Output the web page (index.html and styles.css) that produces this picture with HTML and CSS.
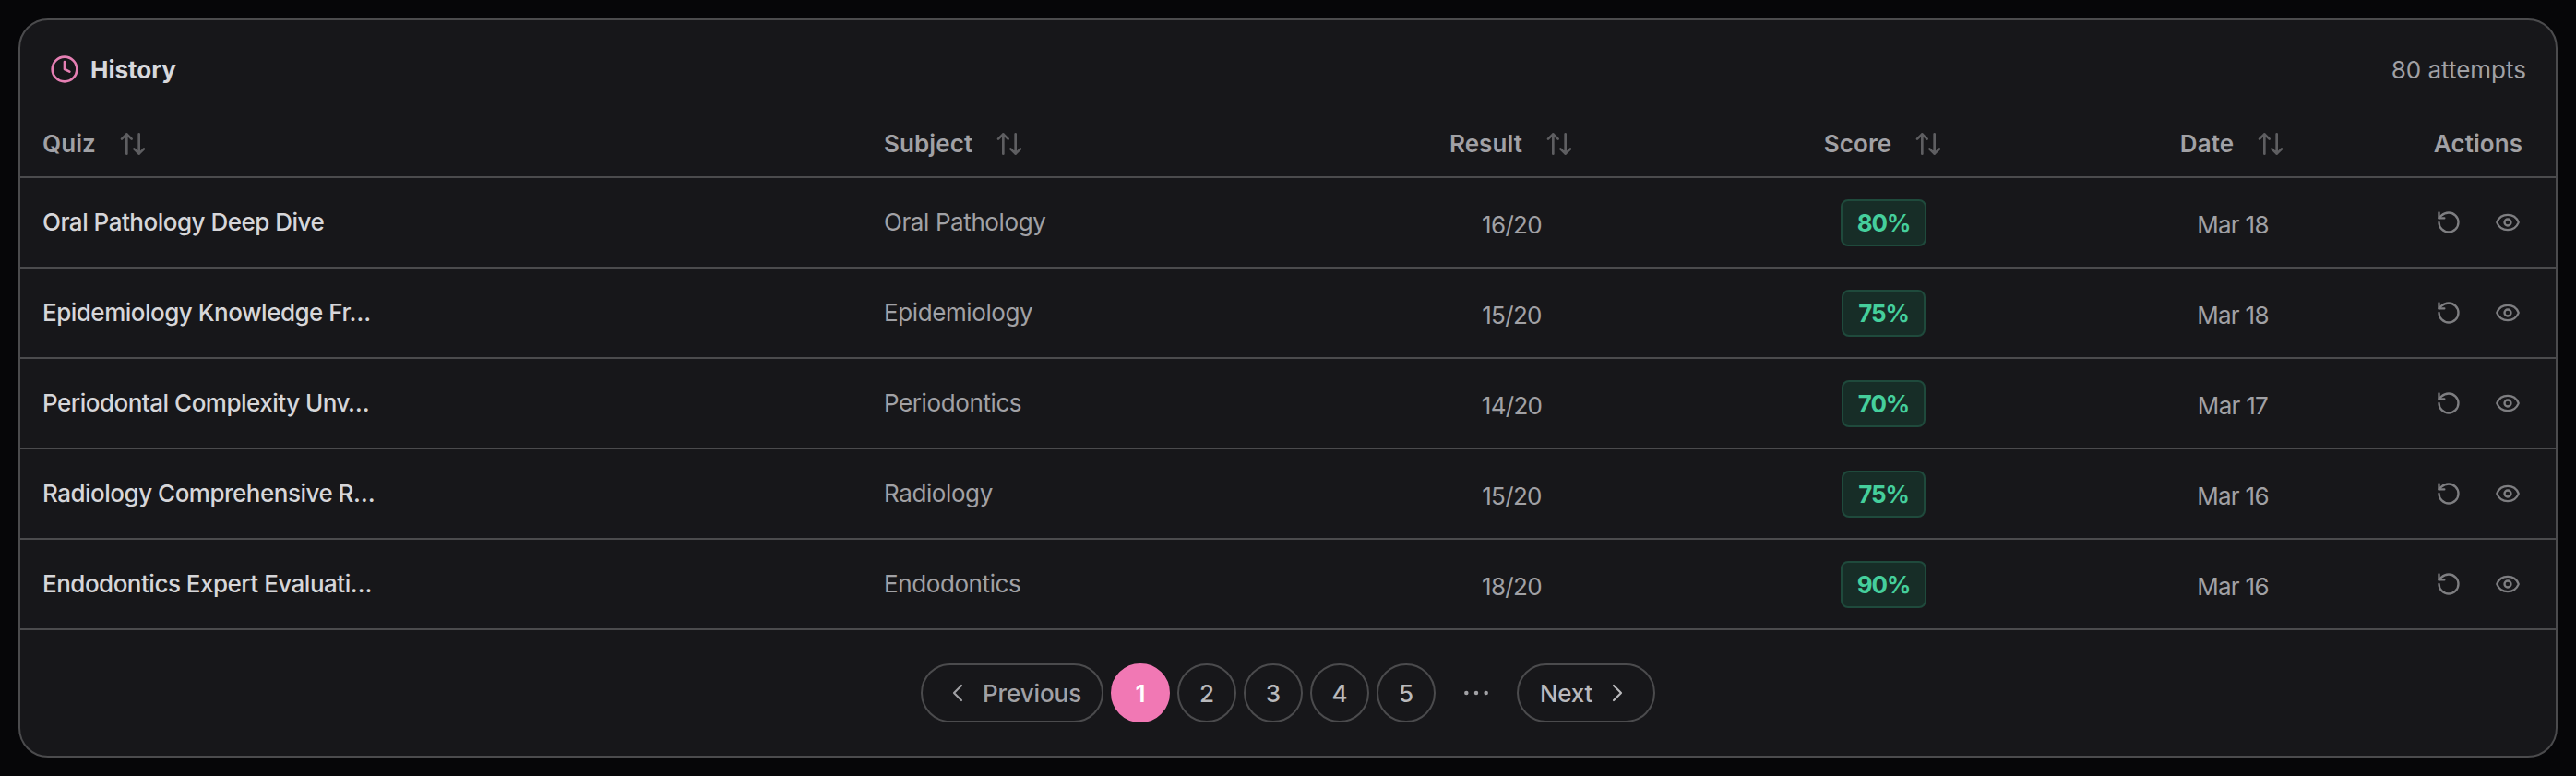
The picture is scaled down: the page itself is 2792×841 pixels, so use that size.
FILE: index.html
```
<!DOCTYPE html>
<html lang="en">
<head>
<meta charset="UTF-8" />
<title>History</title>
<link rel="stylesheet" href="styles.css">
</head>
<body>
  <svg class="sprite" aria-hidden="true">
    <symbol id="i-clock" viewBox="0 0 24 24"><circle cx="12" cy="12" r="10" /><path d="M12 6v6l4 2" /></symbol>
    <symbol id="i-sort" viewBox="0 0 24 24"><path d="m21 16-4 4-4-4M17 20V4M3 8l4-4 4 4M7 4v16" /></symbol>
    <symbol id="i-retry" viewBox="0 0 24 24"><path d="M3 12a9 9 0 1 0 9-9 9.75 9.75 0 0 0-6.74 2.74L3 8" /><path d="M3 3v5h5" /></symbol>
    <symbol id="i-eye" viewBox="0 0 24 24"><path d="M2.06 12.35a1 1 0 0 1 0-.7 10.75 10.75 0 0 1 19.88 0 1 1 0 0 1 0 .7 10.75 10.75 0 0 1-19.88 0" /><circle cx="12" cy="12" r="3" /></symbol>
    <symbol id="i-left" viewBox="0 0 24 24"><path d="m15 18-6-6 6-6" /></symbol>
    <symbol id="i-right" viewBox="0 0 24 24"><path d="m9 18 6-6-6-6" /></symbol>
    <symbol id="i-more" viewBox="0 0 24 24"><circle cx="4" cy="12" r="1.7" /><circle cx="12" cy="12" r="1.7" /><circle cx="20" cy="12" r="1.7" /></symbol>
  </svg>

  <section class="card">
    <header class="card-header">
      <h2 class="title"><svg class="icon title-icon"><use href="#i-clock" /></svg><span>History</span></h2>
      <span class="attempts">80 attempts</span>
    </header>

    <table class="history">
      <colgroup>
        <col class="col-quiz"><col class="col-subject"><col class="col-result">
        <col class="col-score"><col class="col-date"><col class="col-actions">
      </colgroup>
      <thead>
        <tr>
          <th class="left"><span class="sort"><span>Quiz</span><svg class="icon"><use href="#i-sort" /></svg></span></th>
          <th class="left"><span class="sort"><span>Subject</span><svg class="icon"><use href="#i-sort" /></svg></span></th>
          <th><span class="sort"><span>Result</span><svg class="icon"><use href="#i-sort" /></svg></span></th>
          <th><span class="sort"><span>Score</span><svg class="icon"><use href="#i-sort" /></svg></span></th>
          <th><span class="sort"><span>Date</span><svg class="icon"><use href="#i-sort" /></svg></span></th>
          <th>Actions</th>
        </tr>
      </thead>
      <tbody id="rows"></tbody>
    </table>

    <nav class="pagination">
      <button class="page-btn prev"><svg class="icon"><use href="#i-left" /></svg><span>Previous</span></button>
      <button class="page-btn active">1</button>
      <button class="page-btn">2</button>
      <button class="page-btn">3</button>
      <button class="page-btn">4</button>
      <button class="page-btn">5</button>
      <span class="more"><svg class="icon"><use href="#i-more" /></svg></span>
      <button class="page-btn next"><span>Next</span><svg class="icon"><use href="#i-right" /></svg></button>
    </nav>
  </section>

<script src="script.js"></script>
</body>
</html>
```

FILE: styles.css
```
* {
  box-sizing: border-box;
}
body {
  margin: 0;
  padding: 20px;
  background-color: #060608;
  color: #a1a1a5;
  font-family: Inter, 'Liberation Sans', sans-serif;
  font-size: 26px;
}
.sprite {
  display: none;
}
.icon {
  width: 32px;
  height: 32px;
  flex-shrink: 0;
  fill: none;
  stroke: currentColor;
  stroke-width: 2;
  stroke-linecap: round;
  stroke-linejoin: round;
}
.card {
  height: 801px;
  background-color: #17171a;
  border: 2px solid #4b4b4d;
  border-radius: 32px;
  overflow: hidden;
}
.card-header {
  display: flex;
  justify-content: space-between;
  align-items: center;
  height: 97px;
  padding: 9px 32px 0;
}
.title {
  display: flex;
  align-items: center;
  gap: 12px;
  margin: 0;
  font-size: 26px;
  font-weight: 700;
  color: #d8d8dc;
}
.title-icon {
  color: #e57fb3;
}
.history {
  width: 100%;
  table-layout: fixed;
  border-collapse: separate;
  border-spacing: 0;
}
.col-quiz { width: 912px; }
.col-subject { width: 498px; }
.col-result { width: 413px; }
.col-score { width: 393px; }
.col-date { width: 364px; }
.col-actions { width: 168px; }
th, td {
  padding: 0;
  text-align: center;
  vertical-align: middle;
  border-bottom: 2px solid #4b4b4d;
}
th {
  height: 74px;
  font-weight: 600;
  letter-spacing: 0.1px;
}
td {
  height: 98px;
  letter-spacing: -0.4px;
}
.left {
  padding-left: 24px;
  text-align: left;
}
td.left {
  padding-bottom: 2px;
}
.sort {
  display: inline-flex;
  align-items: center;
  gap: 24px;
  vertical-align: middle;
}
.sort .icon {
  color: #5e5e61;
}
.quiz {
  font-weight: 500;
  letter-spacing: -0.5px;
  color: #d6d6d9;
}
.low {
  padding-top: 5px;
  letter-spacing: -0.7px;
}
.badge {
  display: inline-flex;
  align-items: center;
  height: 51px;
  padding: 0 16px;
  border: 2px solid #1f4a3c;
  border-radius: 8px;
  background-color: #172d27;
  color: #45cf9c;
  font-weight: 700;
  letter-spacing: -1.1px;
  vertical-align: middle;
}
.actions {
  display: flex;
  justify-content: center;
}
.action-btn {
  display: flex;
  align-items: center;
  justify-content: center;
  width: 64px;
  height: 64px;
  padding: 0;
  border: none;
  background: none;
  color: #7e7e81;
  cursor: pointer;
}
.action-btn .icon {
  width: 28px;
  height: 28px;
}
.pagination {
  display: flex;
  justify-content: center;
  gap: 8px;
  padding-top: 36px;
}
.page-btn {
  display: flex;
  align-items: center;
  justify-content: center;
  width: 64px;
  height: 64px;
  padding: 0;
  border: 2px solid #4b4b4d;
  border-radius: 32px;
  background: none;
  color: #b9b9bc;
  font: inherit;
  font-weight: 500;
  cursor: pointer;
}
.page-btn .icon {
  stroke-width: 1.6;
}
.page-btn.active {
  border-color: #f178b4;
  background-color: #f178b4;
  color: #fff;
  font-weight: 600;
}
.prev {
  width: 198px;
  gap: 11px;
  color: #a1a1a5;
  letter-spacing: -0.1px;
}
.next {
  width: 150px;
  gap: 11px;
  letter-spacing: -0.3px;
}
.more {
  display: flex;
  align-items: center;
  justify-content: center;
  width: 72px;
  height: 64px;
}
.more .icon {
  fill: currentColor;
  stroke: none;
}
```

FILE: script.js
```
const attempts = [
  { quiz: 'Oral Pathology Deep Dive', subject: 'Oral Pathology', result: '16/20', score: 80, date: 'Mar 18' },
  { quiz: 'Epidemiology Knowledge Fr…', subject: 'Epidemiology', result: '15/20', score: 75, date: 'Mar 18' },
  { quiz: 'Periodontal Complexity Unv…', subject: 'Periodontics', result: '14/20', score: 70, date: 'Mar 17' },
  { quiz: 'Radiology Comprehensive R…', subject: 'Radiology', result: '15/20', score: 75, date: 'Mar 16' },
  { quiz: 'Endodontics Expert Evaluati…', subject: 'Endodontics', result: '18/20', score: 90, date: 'Mar 16' }
];

document.getElementById('rows').innerHTML = attempts.map(a => `
  <tr>
    <td class="left quiz">${a.quiz}</td>
    <td class="left">${a.subject}</td>
    <td class="low">${a.result}</td>
    <td><span class="badge">${a.score}%</span></td>
    <td class="low">${a.date}</td>
    <td>
      <div class="actions">
        <button class="action-btn"><svg class="icon"><use href="#i-retry" /></svg></button>
        <button class="action-btn"><svg class="icon"><use href="#i-eye" /></svg></button>
      </div>
    </td>
  </tr>
`).join('');
```
